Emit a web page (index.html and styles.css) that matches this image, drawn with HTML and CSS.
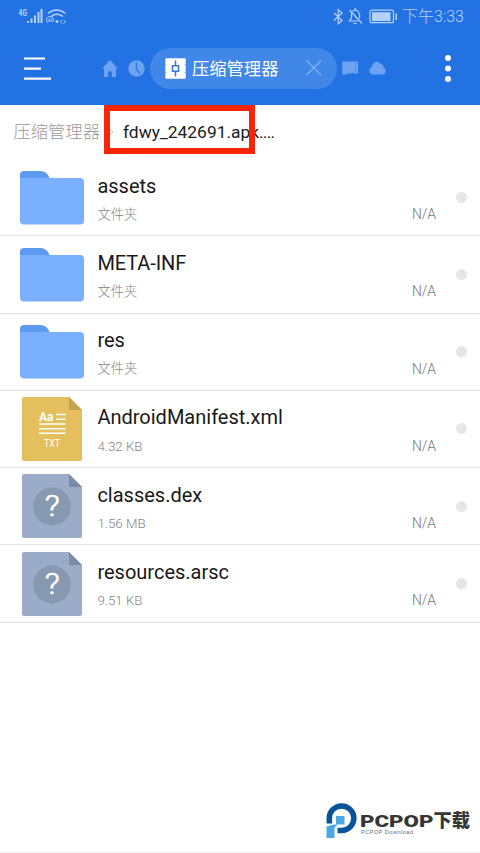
FILE: index.html
```html
<!DOCTYPE html>
<html lang="zh-CN">
<head>
<meta charset="utf-8">
<title>压缩管理器</title>
<link rel="stylesheet" href="styles.css">
</head>
<body>
<svg class="defs" width="0" height="0">
  <symbol id="folder" viewBox="0 0 64 54">
    <path fill="#5b9aee" d="M0 14V4Q0 0 4 0H20Q25 0 28 4L30 8V14Z"/>
    <path fill="#7ab0ff" d="M0 7H60Q64 7 64 11V49.500Q64 53.500 60 53.500H4Q0 53.500 0 49.500Z"/>
  </symbol>
  <symbol id="unknown" viewBox="0 0 60 64">
    <path fill="#9aacc8" d="M2 0H47L60 13V62Q60 64 58 64H2Q0 64 0 62V2Q0 0 2 0Z"/>
    <path fill="#7b8ca9" d="M47 0L60 13H47Z"/>
    <circle cx="30" cy="32.500" r="19" fill="#8799b1"/>
  </symbol>
</svg>
<header class="header">
  <div class="status">
    <svg class="status-left" width="50" height="20" viewBox="0 0 50 20">
      <text x="-.5" y="9.500" class="network" textLength="8.500" lengthAdjust="spacingAndGlyphs">4G</text>
      <g fill="#b7d2fa"><path d="M8 15h2V17H8zM11.500 12.500h2V17h-2zM15 9.500h2V17h-2zM18.500 6h2v11h-2zM21.500 3h2v14h-2z"/><circle cx="38" cy="15.500" r="1.500"/></g>
      <g fill="none" stroke="#b7d2fa" stroke-width="1.500"><path d="M29 7.500Q37.500 .5 46.500 7.500M32 10.500Q38 6 44 10.500"/><path stroke-width="1" d="M28.500 16.500Q25.500 11.500 31 10.500Q35.500 11 34 16M30 16Q29 13 31.500 13Q33 13.500 32 16M43 14L41.500 15.700L43 17.500M44.500 14L46.500 15.700L44.500 17.500"/></g>
    </svg>
    <svg class="status-right" width="66" height="20" viewBox="0 0 66 20" fill="none" stroke="#b7d2fa" stroke-width="1.200">
      <path d="M1 6L9 13.500L5.200 17V2.500L9 6L1 13.500"/>
      <path d="M16.500 3L29 16.500M18.500 6V11L16.500 14H25M19.500 4.500Q23 1.500 25.500 5Q27 7 26.500 11.500M20.500 16.500H23.500M22 1V3"/>
      <rect x="37" y="3.200" width="23.500" height="12.500" rx="2"/>
      <path fill="#b7d2fa" stroke="none" d="M39 5.200H57.500V14H39zM62.500 6.500H64V13H62.500z"/>
    </svg>
    <span class="time">下午3:33</span>
  </div>
  <nav class="toolbar">
    <svg class="menu" width="28" height="26" viewBox="0 0 28 26" stroke="#fff" stroke-width="2.200"><path d="M0 3.500H21M0 13.700H17M0 23.700H27"/></svg>
    <svg class="home" width="16" height="17" viewBox="0 0 16 17"><path fill="#6da3f2" d="M8 0L16 8.500H14V17H9.800V11.500H6.200V17H2V8.500H0Z"/></svg>
    <svg class="clock" width="17" height="17" viewBox="0 0 17 17"><circle cx="8.500" cy="8.500" r="8.200" fill="#6da3f2"/><path fill="none" stroke="#2372e4" stroke-width="1.200" d="M8.300 2.500V9L12 13.500"/></svg>
    <div class="tab">
      <svg width="21" height="21" viewBox="0 0 21 21"><rect x=".3" y=".3" width="20.400" height="20.400" rx="1" fill="#fff"/><path stroke="#3379d7" stroke-width="1.500" fill="none" d="M10.500 2.500V7.500M10.500 13.500V18.500M7.500 7.700H13.500V13.300H7.500Z"/><path stroke="#8db5ee" d="M0 6.500H1.500M0 14.500H1.500M19.500 6.500H21M19.500 14.500H21"/></svg>
      <span class="tab-title">压缩管理器</span>
      <svg class="close" width="16" height="16" viewBox="0 0 16 16" stroke="#85b1f4" stroke-width="1.200"><path d="M.5 .5L15 15M15 .5L.5 15"/></svg>
    </div>
    <svg class="card" width="17" height="14" viewBox="0 0 17 14"><path fill="#6da3f2" d="M1 .5H16V12.500H12L11 11.500L10 12.500H6L4 13.500H1Q.3 13.500 .3 12V1.500Z"/><path stroke="#347de7" stroke-dasharray="1 1" d="M13.800 2V11.500"/></svg>
    <svg class="cloud" width="17" height="14" viewBox="0 0 17 14"><path fill="#6da3f2" d="M4 13.500C-.5 13.500-1 7 3 6C3 1 9-1.500 11.500 3C14 3 14.500 5 14.500 6.500C18 8 17 13.500 13.500 13.500Z"/></svg>
    <svg class="more" width="6" height="28" viewBox="0 0 6 28" fill="#fff"><circle cx="3" cy="4" r="3"/><circle cx="3" cy="14.500" r="3"/><circle cx="3" cy="25" r="3"/></svg>
  </nav>
</header>
<div class="path">
  <span class="path-root">压缩管理器</span>
  <svg class="chevron" width="5" height="8" viewBox="0 0 5 8" fill="none" stroke="#c8c8c8"><path d="M.5 1L4 4L.5 7"/></svg>
  <span class="path-file">fdwy_242691.apk<span class="dots">....</span></span>
  <div class="highlight"></div>
</div>
<main class="files">
  <div class="row"><svg class="folder"><use href="#folder"/></svg><div class="info"><div class="name">assets</div><div class="meta">文件夹</div></div><span class="na">N/A</span><i class="dot"></i></div>
  <div class="row"><svg class="folder"><use href="#folder"/></svg><div class="info"><div class="name meta-inf">META-INF</div><div class="meta">文件夹</div></div><span class="na">N/A</span><i class="dot"></i></div>
  <div class="row"><svg class="folder"><use href="#folder"/></svg><div class="info"><div class="name">res</div><div class="meta">文件夹</div></div><span class="na">N/A</span><i class="dot"></i></div>
  <div class="row">
    <svg class="file" viewBox="0 0 60 64">
      <path fill="#e3c05d" d="M2 0H47L60 13V62Q60 64 58 64H2Q0 64 0 62V2Q0 0 2 0Z"/>
      <path fill="#c3a34c" d="M47 0L60 13H47Z"/>
      <text x="17" y="24" class="aa" textLength="14.500" lengthAdjust="spacingAndGlyphs">Aa</text>
      <path stroke="#fff" stroke-width="1.500" d="M34 17.500H43.500M34 22.200H43.500M17 27H43.500M17 31.700H43.500M17 36.300H43.500"/>
      <text x="22" y="50" class="txt" textLength="16" lengthAdjust="spacingAndGlyphs">TXT</text>
    </svg>
    <div class="info"><div class="name">AndroidManifest.xml</div><div class="meta">4.32 KB</div></div><span class="na">N/A</span><i class="dot"></i>
  </div>
  <div class="row"><svg class="file" viewBox="0 0 60 64"><use href="#unknown" width="60" height="64"/><text x="22.800" y="42" class="question" textLength="15" lengthAdjust="spacingAndGlyphs">?</text></svg><div class="info"><div class="name">classes.dex</div><div class="meta">1.56 MB</div></div><span class="na">N/A</span><i class="dot"></i></div>
  <div class="row"><svg class="file" viewBox="0 0 60 64"><use href="#unknown" width="60" height="64"/><text x="22.800" y="42" class="question" textLength="15" lengthAdjust="spacingAndGlyphs">?</text></svg><div class="info"><div class="name">resources.arsc</div><div class="meta">9.51 KB</div></div><span class="na">N/A</span><i class="dot"></i></div>
</main>
<footer class="footer">
  <svg width="146" height="38" viewBox="0 0 146 38">
    <path fill="none" stroke="#07549b" stroke-width="5.500" d="M3.300 20.500V15.500A12.300 12.300 0 1 1 15.600 27.500H11.500"/>
    <path fill="#4ba8e5" d="M10 13H18.500V21.500H10Z"/>
    <path fill="#4ba8e5" d="M.5 23.500L8 21.500H12L8.500 24.500V35H.5Z"/>
    <text x="34" y="23.700" class="brand" textLength="73.500" lengthAdjust="spacingAndGlyphs">PCPOP</text>
    <text x="107.500" y="24.300" class="brand-cn" textLength="36.500" lengthAdjust="spacingAndGlyphs">下载</text>
    <text x="35" y="31" class="brand-sub" textLength="52" lengthAdjust="spacing">PCPOP Download</text>
  </svg>
</footer>
</body>
</html>
```
FILE: styles.css
```css
* { box-sizing: border-box; }
body {
  margin: 0;
  width: 480px;
  height: 853px;
  overflow: hidden;
  display: flex;
  flex-direction: column;
  background: #fff;
  font-family: Roboto, "Noto Sans CJK SC", sans-serif;
}
svg { display: block; flex: none; }
.defs { position: absolute; }
.header { height: 105px; flex: none; background: #2372e4; }
.status { height: 33px; display: flex; align-items: center; padding-left: 19px; color: #b7d2fa; }
.status-right { margin-left: 264px; }
.status-left { margin-top: -2px; overflow: visible; }
.time { margin-left: 3px; font-size: 16px; font-weight: 300; white-space: nowrap; line-height: 20px; }
.network { font: 700 9px Roboto, sans-serif; fill: #b7d2fa; }
.toolbar { height: 72px; display: flex; align-items: center; padding: 0 0 2px 24px; }
.home { margin-left: 50px; }
.clock { margin-left: 10px; }
.tab {
  width: 187px;
  height: 41px;
  margin-left: 5px;
  padding: 0 15px;
  border-radius: 21px;
  background: #4187e8;
  display: flex;
  align-items: center;
}
.tab-title { margin: 2px 0 0 6px; color: #fff; font-size: 17.3px; line-height: 24px; white-space: nowrap; }
.close { margin-left: auto; }
.card { margin-left: 5px; }
.cloud { margin-left: 10px; }
.more { margin-left: 59px; }
.path { position: relative; flex: none; height: 54px; display: flex; align-items: center; padding-left: 13.5px; font-size: 17.3px; }
.path-root { width: 86.5px; color: #999; font-weight: 300; white-space: nowrap; line-height: 24px; }
.chevron { margin-left: 9px; }
.path-file { margin-left: 9px; color: #1b1b1b; font-size: 17.4px; line-height: 24px; white-space: nowrap; }
.dots { letter-spacing: -.8px; }
.highlight { position: absolute; left: 104px; top: 0; width: 151px; height: 49px; border: 6px solid #f82508; }
.files { flex: none; }
.row { height: 77.3px; display: flex; padding-left: 20px; border-bottom: 1px solid #e4e4e4; }
.folder { width: 64px; height: 54px; margin-top: 11.6px; }
.file { width: 60px; height: 64px; margin: 6.2px 2px 0; }
.info { width: 305px; margin-left: 13.4px; padding-top: 14.5px; }
.name { color: #191919; font-size: 20px; line-height: 25px; white-space: nowrap; }
.meta-inf { letter-spacing: -.1px; }
.meta { margin-top: 7.3px; color: #858585; font-size: 13.3px; line-height: 18px; font-weight: 300; }
.na { width: 34px; margin-top: 46px; margin-left: 9.6px; color: #777; font-size: 13.9px; line-height: 18px; font-weight: 300; }
.dot { width: 11px; height: 11px; margin: 32.6px 0 0 9.8px; border-radius: 50%; background: #e6e6e6; }
.question { font: 300 29px Roboto, sans-serif; fill: #fff; stroke: #fff; stroke-width: .6px; }
.aa { font: 700 13px Roboto, sans-serif; fill: #fff; }
.txt { font: 400 10px Roboto, sans-serif; fill: #fff; }
.footer { margin-top: auto; height: 53px; padding: 2.5px 0 0 326px; border-bottom: 1px solid #ededed; }
.brand { font: 900 17px Roboto, sans-serif; fill: #353638; }
.brand-cn { font: 900 18px "Noto Sans CJK SC", sans-serif; fill: #353638; }
.brand-sub { font: 400 5.500px "Liberation Sans", sans-serif; fill: #606570; }
```
